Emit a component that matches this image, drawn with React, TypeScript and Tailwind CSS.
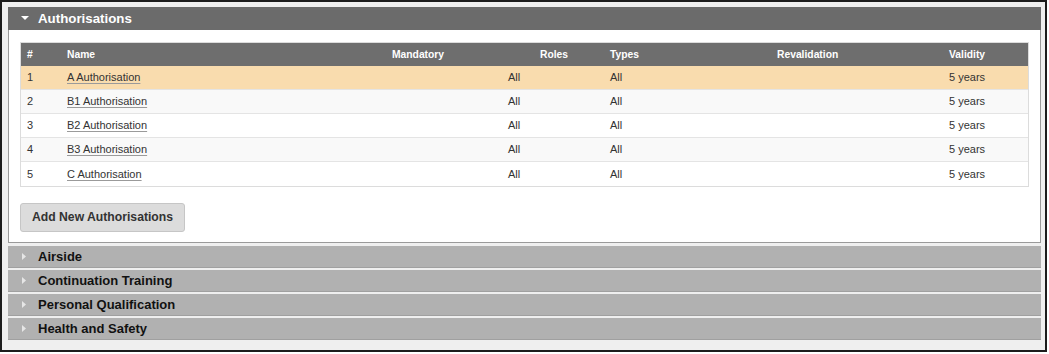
import React from 'react';

const rows = [
    { n: 1, name: 'A Authorisation' },
    { n: 2, name: 'B1 Authorisation' },
    { n: 3, name: 'B2 Authorisation' },
    { n: 4, name: 'B3 Authorisation' },
    { n: 5, name: 'C Authorisation' },
];

const sections = ['Airside', 'Continuation Training', 'Personal Qualification', 'Health and Safety'];

const cols = 'grid grid-cols-[40px_325px_115px_107px_163px_172px_1fr]';

const Caret = ({ open }: { open?: boolean }) =>
    open ? (
        <svg width="8" height="5" viewBox="0 0 8 5" className="fill-white">
            <path d="M0 0h8L4 4z" />
        </svg>
    ) : (
        <svg width="4" height="7" viewBox="0 0 4 7" className="fill-[#e6e6e6]">
            <path d="M0 0l4 3.5L0 7z" />
        </svg>
    );

export default function App() {
    return (
        <div className="w-[1049px] h-[354px] bg-white font-['Liberation_Sans',Arial,sans-serif]">
            <div className="w-[1047px] h-[352px] border-2 border-[#1c1c1c] bg-[#efefef] pt-[5px] pl-[6px] pr-[4px] flex flex-col gap-[2px]">
                <div>
                    <div className="h-[23px] bg-[#6b6b6b] flex items-center gap-[9px] pl-[13px]">
                        <Caret open />
                        <span className="text-white font-bold text-[13.3px]">Authorisations</span>
                    </div>
                    <div className="bg-white border border-[#9a9a9a] border-t-0 px-[11px] pt-[12px] pb-[10px]">
                        <div className="border border-[#dcdcdc]">
                            <div className={`${cols} h-[23px] items-center bg-[#6e6e6e] text-white font-bold text-[10.3px]`}>
                                <span className="pl-[6px]">#</span>
                                <span className="pl-[6px]">Name</span>
                                <span className="pl-[6px]">Mandatory</span>
                                <span className="pl-[39px]">Roles</span>
                                <span className="pl-[2px]">Types</span>
                                <span className="pl-[6px]">Revalidation</span>
                                <span className="pl-[6px]">Validity</span>
                            </div>
                            {rows.map((r, i) => (
                                <div
                                    key={r.n}
                                    className={`${cols} h-[24px] items-center text-[11px] text-[#333] border-b border-[#e4e4e4] last:border-b-0 ${
                                        i === 0 ? 'bg-[#f9dcae]' : i % 2 === 1 ? 'bg-[#f9f9f9]' : 'bg-white'
                                    }`}
                                >
                                    <span className="pl-[6px]">{r.n}</span>
                                    <span className="pl-[6px]">
                                        <span className="underline decoration-[#9a9a9a] underline-offset-2">{r.name}</span>
                                    </span>
                                    <span />
                                    <span className="pl-[7px]">All</span>
                                    <span className="pl-[2px]">All</span>
                                    <span />
                                    <span className="pl-[6px]">5 years</span>
                                </div>
                            ))}
                        </div>
                        <button className="mt-[16px] h-[29px] w-[165px] bg-[#dcdcdc] border border-[#c6c6c6] rounded-[3px] text-[12.2px] font-bold text-[#333]">
                            Add New Authorisations
                        </button>
                    </div>
                </div>
                <div className="flex flex-col gap-[2px] mt-[1px]">
                    {sections.map((s) => (
                        <div key={s} className="h-[22px] bg-[#b1b1b1] border-b border-[#a0a0a0] flex items-center gap-[12px] pl-[14px]">
                            <Caret />
                            <span className="font-bold text-[13px] text-[#111]">{s}</span>
                        </div>
                    ))}
                </div>
            </div>
        </div>
    );
}
